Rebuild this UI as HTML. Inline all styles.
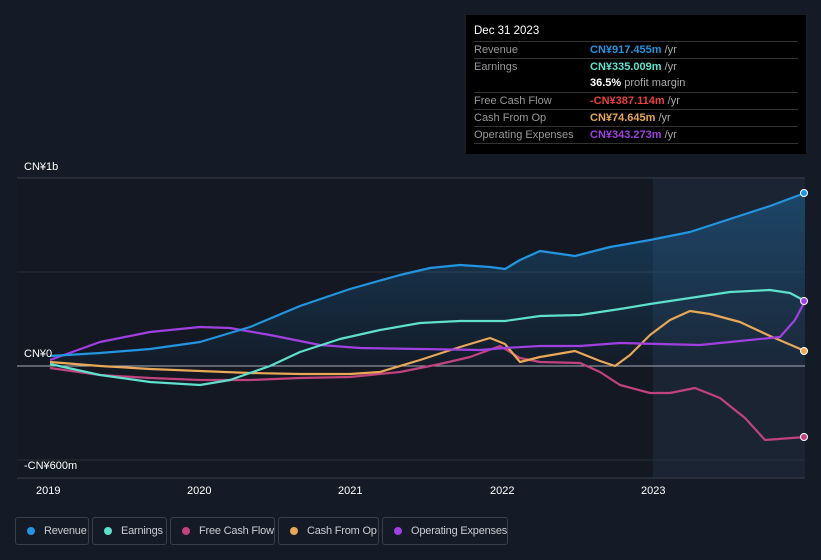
<!DOCTYPE html><html><head><style>
body{margin:0;width:821px;height:560px;background:#151b26;font-family:"Liberation Sans",sans-serif;overflow:hidden;position:relative}
.tt{position:absolute;left:466px;top:15px;width:340px;height:139px;background:#000;color:#fff;font-size:11px}
.tt .h{position:absolute;left:8px;top:10px;font-size:11.5px}
.row{position:absolute;left:8px;width:324px;border-top:1px solid #333;height:17px;line-height:17px;color:#999}
.row span{position:absolute;left:116px;font-weight:bold}
.row i{font-style:normal;color:#aaa;font-weight:normal}
.lg{position:absolute;top:517px;height:28px;border:1px solid #3a404b;border-radius:3px;color:#c8ccd2;font-size:11px;line-height:26px;box-sizing:border-box;white-space:nowrap;overflow:hidden}
.lg b{position:absolute;left:11px;top:9px;width:8px;height:8px;border-radius:50%}
.lg span{position:absolute;left:28px;letter-spacing:-0.2px}
.ax{position:absolute;color:#fff;font-size:11px}
</style></head><body>
<svg width="821" height="560" style="position:absolute;left:0;top:0">
<defs><linearGradient id="g" x1="0" y1="0" x2="0" y2="1"><stop offset="0" stop-color="#1f6fa8" stop-opacity=".45"/><stop offset="1" stop-color="#1f6fa8" stop-opacity=".05"/></linearGradient></defs>
<rect x="17" y="178" width="788" height="300" fill="#131822"/>
<rect x="653" y="178" width="152" height="300" fill="#1a2433"/>
<line x1="17" y1="178" x2="805" y2="178" stroke="#39404c"/>
<line x1="17" y1="272" x2="805" y2="272" stroke="#2a303b"/>
<line x1="17" y1="460" x2="805" y2="460" stroke="#2a303b"/>
<line x1="17" y1="478" x2="805" y2="478" stroke="#39404c"/>
<path d="M50,356 L100,353 150,349 200,342 250,327 300,306 350,289 400,275 430,268 460,265 490,267 505,269 520,260 540,251 575,256 610,247 650,240 690,232 730,219 770,206 805,193 L805,366 50,366Z" fill="url(#g)"/>
<line x1="17" y1="366" x2="805" y2="366" stroke="#aab" stroke-width="1"/>
<g fill="none" stroke-width="2.2" stroke-linejoin="round">
<path stroke="#c0427e" d="M50,368 L100,375 150,378 200,380 250,380 300,378 350,377 400,372 440,364 470,357 500,346 520,358 540,362 580,363 600,372 620,385 650,393 670,393 695,388 720,398 745,418 765,440 805,437"/>
<path stroke="#e8a858" d="M50,362 L100,366 150,369 200,371 250,373 300,374 350,374 380,372 420,360 460,347 490,338 505,344 520,362 540,357 575,351 600,361 615,366 630,355 650,335 670,320 690,311 710,314 740,322 770,336 805,351"/>
<path stroke="#a040e0" d="M50,360 L100,342 150,332 200,327 230,328 270,335 320,345 360,348 420,349 480,350 505,348 540,346 580,346 620,343 660,344 700,345 740,341 780,337 795,320 805,301"/>
<path stroke="#5ee0cc" d="M50,364 L100,375 150,382 200,385 230,380 270,366 300,352 340,339 380,330 420,323 460,321 505,321 540,316 580,315 620,309 650,304 690,298 730,292 770,290 790,293 805,301"/>
<path stroke="#2394e0" d="M50,356 L100,353 150,349 200,342 250,327 300,306 350,289 400,275 430,268 460,265 490,267 505,269 520,260 540,251 575,256 610,247 650,240 690,232 730,219 770,206 805,193"/>
</g>
<circle cx="804" cy="193" r="3.5" fill="#2394e0" stroke="#fff"/>
<circle cx="804" cy="301" r="3.5" fill="#a040e0" stroke="#fff"/>
<circle cx="804" cy="351" r="3.5" fill="#e8a858" stroke="#fff"/>
<circle cx="804" cy="437" r="3.5" fill="#c0427e" stroke="#fff"/>
</svg>
<div class="ax" style="left:24px;top:161px">CN¥1b</div>
<div class="ax" style="left:24px;top:348px">CN¥0</div>
<div class="ax" style="left:24px;top:460px">-CN¥600m</div>
<div class="ax" style="left:36px;top:485px">2019</div>
<div class="ax" style="left:187px;top:485px">2020</div>
<div class="ax" style="left:338px;top:485px">2021</div>
<div class="ax" style="left:490px;top:485px">2022</div>
<div class="ax" style="left:641px;top:485px">2023</div>
<div class="tt"><div class="h">Dec 31 2023</div>
<div class="row" style="top:26px">Revenue<span style="color:#2394e0">CN¥917.455m <i>/yr</i></span></div>
<div class="row" style="top:43px">Earnings<span style="color:#5ee0cc">CN¥335.009m <i>/yr</i></span></div>
<div class="row" style="top:60px;border-top:none"><span style="color:#fff">36.5% <i>profit margin</i></span></div>
<div class="row" style="top:77px">Free Cash Flow<span style="color:#e84040">-CN¥387.114m <i>/yr</i></span></div>
<div class="row" style="top:94px">Cash From Op<span style="color:#e8a858">CN¥74.645m <i>/yr</i></span></div>
<div class="row" style="top:111px">Operating Expenses<span style="color:#a040e0">CN¥343.273m <i>/yr</i></span></div>
<div class="row" style="top:128px;height:0"></div>
</div>
<div class="lg" style="left:15px;width:74px"><b style="background:#2394e0"></b><span>Revenue</span></div>
<div class="lg" style="left:92px;width:75px"><b style="background:#5ee0cc"></b><span>Earnings</span></div>
<div class="lg" style="left:170px;width:105px"><b style="background:#c0427e"></b><span>Free Cash Flow</span></div>
<div class="lg" style="left:278px;width:101px"><b style="background:#e8a858"></b><span>Cash From Op</span></div>
<div class="lg" style="left:382px;width:126px"><b style="background:#a040e0"></b><span>Operating Expenses</span></div>
</body></html>
